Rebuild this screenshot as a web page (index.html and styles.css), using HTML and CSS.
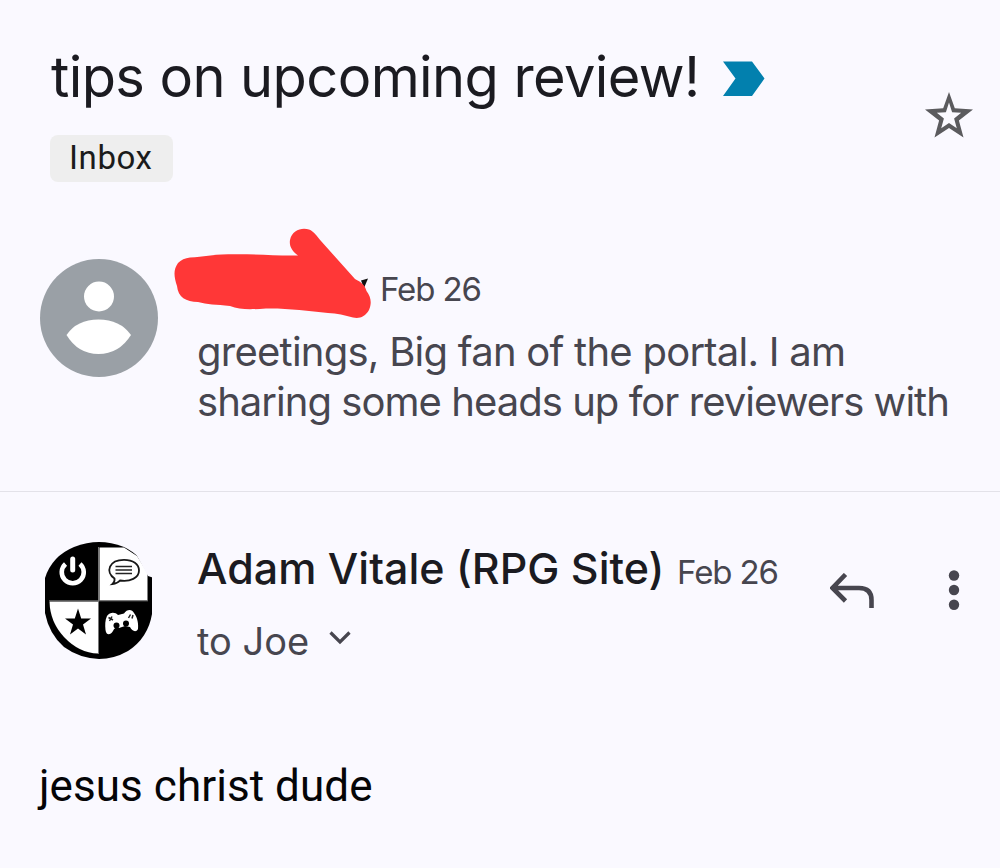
FILE: index.html
```html
<!DOCTYPE html>
<html lang="en">
<head>
<meta charset="utf-8">
<title>tips on upcoming review!</title>
<link rel="stylesheet" href="styles.css">
</head>
<body>
<main class="thread">
  <header class="subject">
    <div class="subject-main">
      <div class="subject-line">
        <h1 class="title">tips on upcoming review!</h1>
        <svg class="important" width="42" height="36" viewBox="0 0 42 36"><path d="M0 .5H29L41.500 17.500 29 35H0L12.500 17.500Z" fill="#0280ae"/></svg>
      </div>
      <span class="label">Inbox</span>
    </div>
    <svg class="star" width="48" height="46" viewBox="0 0 48 46"><path fill="#5b5b5e" fill-rule="evenodd" d="M24 0 29.800 16.300 48 17.400 33.900 28.600 38.500 45.500 24 36 9.500 45.500 14.100 28.600 0 17.400 18.200 16.300ZM24 10.500 20.900 20.300 11.800 20.700 18.900 26.600 16.200 36.300 24 31 31.800 36.300 29.100 26.600 36.200 20.700 27.100 20.300Z"/></svg>
  </header>

  <section class="message collapsed">
    <svg class="avatar" width="118" height="118" viewBox="0 0 118 118"><circle cx="59" cy="59" r="59" fill="#9aa0a6"/><circle cx="59" cy="37.500" r="15" fill="#fff"/><path d="M26.500 76Q37 60.500 58.500 60.500T91 76Q79 95 58.500 95T26.500 76Z" fill="#fff"/></svg>
    <div class="body">
      <div class="from"><span class="date">Feb 26</span></div>
      <p class="snippet">greetings, Big fan of the portal. I am<br><span class="second">sharing some heads up for reviewers with</span></p>
    </div>
    <svg class="scribble" width="200" height="92" viewBox="172 227 200 92"><path d="M361 280.500 368 278.500 364 288Z" fill="#111"/><path d="M190 257.500C204 257 212 254.500 228 254.300 252 253.500 275 256 298 255.500 292 251 289 246 290 240 292 230 302 227 309 229.500 314 231.500 317 236 321 241L355 279C361 282 365 285 366.500 291 371 297 372 303 369 310 365 317 359 319 353 317.500 345 315.500 337 313 328 313 308 311 286 308 266 308.500 251 309.500 240 310 230 306 216 304.500 207 304.500 198 302 186 302 178 297 177 286 174 277 173 270 178 263 181 260 185 258 190 257.500Z" fill="#ff3737"/></svg>
  </section>

  <section class="message expanded">
    <svg class="logo" width="110" height="118" viewBox="0 0 110 118">
      <path d="M30 5Q43 0 55 0T80 5Q99 14 108 35V72Q104 96 84 109 70 117 55 117 35 116 20 105 5 92 1 71V36Q8 14 30 5Z" fill="#000"/>
      <path d="M55.500 5.500H80L93 14 103.500 31V58.500H55.500Z" fill="#fff"/>
      <path d="M78 3Q88 7 92 12L104 34 110 36V0Z" fill="#faf9ff"/>
      <path d="M5.500 59.500H54V111.500Q35 111 20 95 6 80 5.500 59.500Z" fill="#fff"/>
      <path d="M54.500 5V112M5 58.800H104" stroke="#777" stroke-width="1" fill="none"/>
      <path d="M21.500 22A11 11 0 1 0 36 22" fill="none" stroke="#fff" stroke-width="4.600"/><path d="M28.700 17V28" stroke="#fff" stroke-width="5" stroke-linecap="round"/>
      <path d="M70.500 36.500C61 30 65 17.800 80 17.800 89 17.800 95 22 95 28.500 95 36 86 40 76 38.500Q73.500 41.500 68.500 42 71 40 70.500 36.500Z" fill="#fff" stroke="#171717" stroke-width="1.800"/>
      <path d="M71.500 24.500H88M71.500 28H88M71.500 31.500H88" stroke="#222" stroke-width="1.400"/>
      <path d="M34 66.500 37.200 76.500H47L39 82.500 42 92.500 34 86.500 26 92.500 29 82.500 21 76.500H30.800Z" fill="#000"/>
      <path d="M63 74C66 70 71 70 74 73L80 71.500C83 67 88 67 90 71 94 76 94.500 83 94 87 92 91 88 89 86 85L81 84 75 86Q71 84 69 89C66 94 62 93 61.500 88 61 83 61 78 63 74Z" fill="#fff"/>
      <circle cx="72.500" cy="83.500" r="3" fill="#000"/><circle cx="82" cy="81.500" r="3" fill="#000"/>
      <path d="M64.500 75.500 69 78M68 74.500 65.500 79M84.500 76 86.500 72.500M88 76.500 89 73" stroke="#222" stroke-width="1.500"/>
    </svg>
    <div class="body">
      <div class="from"><strong class="sender">Adam Vitale (RPG Site)</strong><span class="date">Feb 26</span></div>
      <div class="to"><span>to Joe</span><svg width="22" height="14" viewBox="0 0 22 14"><path d="M1.500 1.500 11 11 20.500 1.500" fill="none" stroke="#47464f" stroke-width="3.200"/></svg></div>
    </div>
    <div class="actions">
      <svg width="44" height="36" viewBox="0 0 44 36"><path d="M15.500 1.500 2.500 15 15.500 28M2.500 15H29Q41.500 15 41.500 27V35" fill="none" stroke="#47464f" stroke-width="4.600"/></svg>
      <svg width="12" height="40" viewBox="0 0 12 40" fill="#47464f"><circle cx="6" cy="5.500" r="5.200"/><circle cx="6" cy="20" r="5.200"/><circle cx="6" cy="34.700" r="5.200"/></svg>
    </div>
  </section>
  <p class="reply">jesus christ dude</p>
</main>
</body>
</html>
```
FILE: styles.css
```css
* { box-sizing: border-box; }
body { margin: 0; background: #faf9ff; font-family: Inter, "Open Sans", sans-serif; color: #47464f; }
h1, p { margin: 0; }
svg { display: block; flex: none; }
.thread { width: 1000px; height: 868px; overflow: hidden; display: flex; flex-direction: column; white-space: nowrap; }
.subject { height: 230px; padding: 47px 27px 0 50px; display: flex; justify-content: space-between; flex: none; }
.subject-line { display: flex; height: 88px; width: 715px; justify-content: space-between; }
.title { padding-left: 1px; font-size: 56px; line-height: 61px; font-weight: 400; letter-spacing: -0.6px; color: #1b1b21; }
.important { margin-top: 14px; }
.label { display: block; width: 123px; height: 47px; padding-left: 19px; border-radius: 8px; background: #eeeeee; color: #1b1b1b; font: 33px/46px Roboto, sans-serif; letter-spacing: 0.6px; }
.star { margin-top: 45px; }
.message { display: flex; flex: none; }
.collapsed { position: relative; height: 262px; padding: 29px 0 0 40px; border-bottom: 1px solid #e3e2e9; }
.collapsed .body { margin-left: 39px; }
.collapsed .from { height: 68px; padding-left: 183px; }
.date { font-size: 33px; line-height: 60px; letter-spacing: -1.1px; }
.snippet { font-size: 40px; line-height: 50px; letter-spacing: -0.75px; }
.second { letter-spacing: -0.96px; }
.scribble { position: absolute; left: 172px; top: -3px; }
.expanded { height: 240px; padding: 50px 40px 0 44px; }
.expanded .body { margin-left: 43px; width: 590px; }
.expanded .from { display: flex; align-items: baseline; justify-content: space-between; height: 70px; width: 581px; }
.sender { margin-top: -2px; font-size: 43px; line-height: 52px; font-weight: 500; color: #1b1b21; }
.to { display: flex; align-items: center; gap: 20px; font-size: 38px; line-height: 58px; }
.to svg { margin-top: -6px; }
.actions { display: flex; justify-content: space-between; width: 130px; margin-left: 43px; padding-top: 28px; }
.actions svg:first-child { margin-top: 3px; }
.reply { padding: 26px 0 0 39px; font: 44px/56px Roboto, sans-serif; letter-spacing: 0.06px; color: #050507; }
```
